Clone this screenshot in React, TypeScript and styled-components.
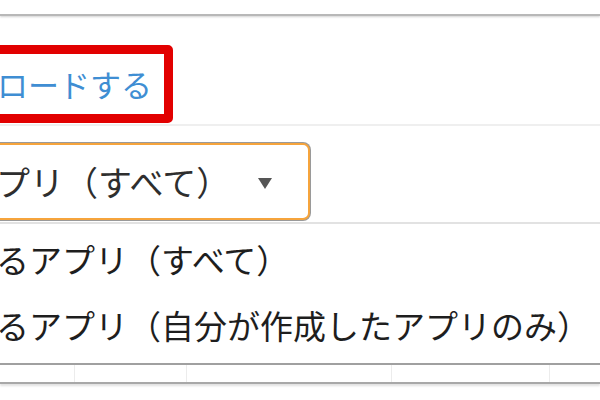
import styled, { createGlobalStyle } from "styled-components";

const GlobalStyle = createGlobalStyle`
  html, body {
    margin: 0;
    padding: 0;
    background: #ffffff;
    overflow: hidden;
  }
  body {
    font-family: "Noto Sans CJK JP", "Noto Sans", sans-serif;
  }
`;

const Page = styled.div`
  width: 600px;
  height: 400px;
  overflow: hidden;
  display: flex;
  flex-direction: column;
`;

const TopBar = styled.div`
  height: 14px;
  border-bottom: 2px solid #b8b8b8;
  box-shadow: 0 1px 2px rgba(0, 0, 0, 0.18);
`;

const ActionRow = styled.div`
  display: flex;
  padding-top: 29px;
  padding-bottom: 1px;
  border-bottom: 2px solid #efefef;
`;

const Highlight = styled.div`
  margin-left: -20px;
  width: 175px;
  height: 58px;
  border: 9px solid #e20000;
  border-radius: 5px;
  display: flex;
  align-items: center;
  padding-bottom: 2px;
  box-sizing: content-box;
`;

const LinkText = styled.span`
  color: #3f8ed3;
  font-size: 31px;
  white-space: nowrap;
  margin-left: 8px;
`;

const FilterArea = styled.div`
  position: relative;
  padding-top: 17px;
`;

const SelectBox = styled.div`
  position: relative;
  z-index: 1;
  margin-left: -20px;
  width: 330px;
  height: 77px;
  box-sizing: border-box;
  border: 2px solid #f6a43c;
  border-radius: 7px;
  box-shadow: 0 0 0 1px #9a9a9a;
  display: flex;
  align-items: center;
  padding-left: 14px;
  background: #fff;
`;

const SelectText = styled.span`
  color: #2e2e2e;
  font-size: 34px;
  white-space: nowrap;
  flex: 1;
`;

const Caret = styled.span`
  width: 0;
  height: 0;
  border-left: 7px solid transparent;
  border-right: 7px solid transparent;
  border-top: 11px solid #555;
  margin-right: 36px;
  margin-top: 3px;
`;

const OptionList = styled.div`
  margin-top: 2px;
  border-top: 2px solid #e2e2e2;
  display: flex;
  flex-direction: column;
  padding-top: 2px;
  padding-bottom: 5px;
`;

const Option = styled.div`
  height: 66px;
  display: flex;
  align-items: center;
  color: #1e1e1e;
  font-size: 33px;
  white-space: nowrap;
  margin-left: -4px;
`;

const TableHead = styled.div`
  height: 17px;
  border-top: 2px solid #a0a0a0;
  border-bottom: 2px solid #a8a8a8;
  box-shadow: 0 2px 2px rgba(0, 0, 0, 0.12);
  display: grid;
  grid-template-columns: 75px 112px 205px 158px 1fr;
`;

const HeadCell = styled.div`
  border-right: 1px solid #ececec;
  &:last-child {
    border-right: none;
  }
`;

export default function App() {
  return (
    <>
      <GlobalStyle />
      <Page>
        <TopBar />
        <ActionRow>
          <Highlight>
            <LinkText>ロードする</LinkText>
          </Highlight>
        </ActionRow>
        <FilterArea>
          <SelectBox>
            <SelectText>プリ（すべて）</SelectText>
            <Caret />
          </SelectBox>
          <OptionList>
            <Option>るアプリ（すべて）</Option>
            <Option>るアプリ（自分が作成したアプリのみ）</Option>
          </OptionList>
        </FilterArea>
        <TableHead>
          <HeadCell />
          <HeadCell />
          <HeadCell />
          <HeadCell />
          <HeadCell />
        </TableHead>
      </Page>
    </>
  );
}
